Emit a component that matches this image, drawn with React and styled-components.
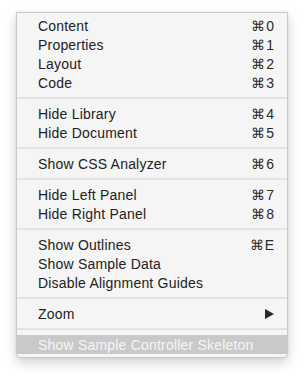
import React from "react";
import styled, { createGlobalStyle } from "styled-components";

const GlobalStyle = createGlobalStyle`
  html, body {
    margin: 0;
    padding: 0;
    background: #ffffff;
  }
`;

const Page = styled.div`
  width: 304px;
  height: 380px;
  padding: 12px 16px 0 16px;
  box-sizing: border-box;
`;

const Menu = styled.div`
  width: 272px;
  box-sizing: border-box;
  background: #f5f5f5;
  border: 1px solid #c9c9c9;
  border-radius: 0 0 5px 5px;
  padding: 3px 0 3px;
  box-shadow: 0 5px 12px rgba(0, 0, 0, 0.18), 0 0 3px rgba(0, 0, 0, 0.08);
  font-family: "Liberation Sans", Arial, sans-serif;
  font-size: 14px;
  letter-spacing: 0.2px;
  color: #222222;
`;

const Item = styled.div`
  display: flex;
  align-items: center;
  justify-content: space-between;
  height: 19px;
  padding: 0 13px 0 21px;
  background: ${(p) => (p.$active ? "#c9c9c9" : "transparent")};
  color: ${(p) => (p.$active ? "#f4f7fb" : "#222222")};
`;

const Label = styled.span`
  white-space: nowrap;
`;

const Shortcut = styled.span`
  display: flex;
  align-items: center;
  gap: 1px;
  min-width: 22px;
  color: #2a2a2a;
  letter-spacing: 0;
`;

const Separator = styled.div`
  height: 12px;
  display: flex;
  align-items: center;

  &::after {
    content: "";
    display: block;
    width: 100%;
    height: 2px;
    background: #e3e3e3;
  }
`;

const Arrow = styled.svg`
  width: 9px;
  height: 10px;
  fill: #2a2a2a;
`;

const groups = [
  [
    ["Content", "0"],
    ["Properties", "1"],
    ["Layout", "2"],
    ["Code", "3"],
  ],
  [
    ["Hide Library", "4"],
    ["Hide Document", "5"],
  ],
  [["Show CSS Analyzer", "6"]],
  [
    ["Hide Left Panel", "7"],
    ["Hide Right Panel", "8"],
  ],
  [
    ["Show Outlines", "E"],
    ["Show Sample Data"],
    ["Disable Alignment Guides"],
  ],
];

export default function App() {
  return (
    <>
      <GlobalStyle />
      <Page>
        <Menu>
          {groups.map((group, gi) => (
            <React.Fragment key={gi}>
              {group.map(([label, key]) => (
                <Item key={label}>
                  <Label>{label}</Label>
                  {key && (
                    <Shortcut>
                      <span>⌘</span>
                      <span>{key}</span>
                    </Shortcut>
                  )}
                </Item>
              ))}
              <Separator />
            </React.Fragment>
          ))}
          <Item>
            <Label>Zoom</Label>
            <Arrow viewBox="0 0 9 10">
              <path d="M0 0 L9 5 L0 10 Z" />
            </Arrow>
          </Item>
          <Separator />
          <Item $active>
            <Label>Show Sample Controller Skeleton</Label>
          </Item>
        </Menu>
      </Page>
    </>
  );
}
